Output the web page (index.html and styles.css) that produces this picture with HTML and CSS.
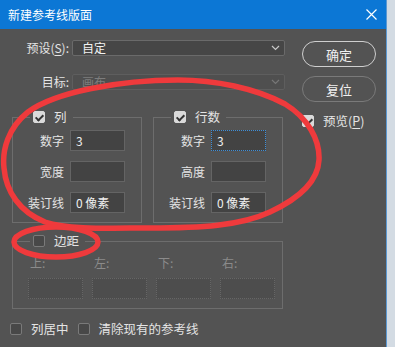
FILE: index.html
```html
<!DOCTYPE html>
<html lang="zh-CN">
<head>
    <meta charset="UTF-8">
    <title>新建参考线版面</title>
    <link rel="stylesheet" href="styles.css">
</head>
<body>
<div class="window">
    <div class="dialog">
        <div class="titlebar">
            <span class="title">新建参考线版面</span>
            <svg class="close" width="11" height="11" viewBox="0 0 11 11">
                <path d="M0.5 0.5 L10.5 10.5 M10.5 0.5 L0.5 10.5" stroke="#fff" stroke-width="1.2"/>
            </svg>
        </div>
        <div class="content">
            <div class="main">
                <div class="field-row">
                    <span class="row-label">预设(<u>S</u>):</span>
                    <div class="select">
                        <span>自定</span>
                        <svg width="9" height="6" viewBox="0 0 9 6"><path d="M1 1 L4.5 4.5 L8 1" fill="none" stroke="#c8c8c8" stroke-width="1.2"/></svg>
                    </div>
                </div>
                <div class="field-row second">
                    <span class="row-label">目标:</span>
                    <div class="select disabled">
                        <span>画布</span>
                        <svg width="9" height="6" viewBox="0 0 9 6"><path d="M1 1 L4.5 4.5 L8 1" fill="none" stroke="#777" stroke-width="1.2"/></svg>
                    </div>
                </div>

                <div class="groups">
                    <fieldset class="group">
                        <legend><span class="check on"></span>列</legend>
                        <div class="num-row"><span class="num-label">数字</span><div class="input">3</div></div>
                        <div class="num-row"><span class="num-label">宽度</span><div class="input"></div></div>
                        <div class="num-row"><span class="num-label">装订线</span><div class="input">0 像素</div></div>
                    </fieldset>
                    <fieldset class="group">
                        <legend><span class="check on"></span>行数</legend>
                        <div class="num-row"><span class="num-label">数字</span><div class="input focus">3</div></div>
                        <div class="num-row"><span class="num-label">高度</span><div class="input"></div></div>
                        <div class="num-row"><span class="num-label">装订线</span><div class="input">0 像素</div></div>
                    </fieldset>
                </div>

                <fieldset class="margins">
                    <legend><span class="check"></span>边距</legend>
                    <div class="margin-grid">
                        <div class="margin-cell"><span class="dim-label">上:</span><div class="input off"></div></div>
                        <div class="margin-cell"><span class="dim-label">左:</span><div class="input off"></div></div>
                        <div class="margin-cell"><span class="dim-label">下:</span><div class="input off"></div></div>
                        <div class="margin-cell"><span class="dim-label">右:</span><div class="input off"></div></div>
                    </div>
                </fieldset>

                <div class="bottom-row">
                    <label class="opt"><span class="check"></span><span>列居中</span></label>
                    <label class="opt"><span class="check"></span><span>清除现有的参考线</span></label>
                </div>
            </div>
            <div class="side">
                <div class="btn primary">确定</div>
                <div class="btn">复位</div>
                <label class="opt preview"><span class="check on"></span><span>预览(<u>P</u>)</span></label>
            </div>
        </div>
    </div>
    <div class="edge"></div>

    <!-- hand-drawn red marks over the dialog -->
    <svg class="marks" width="395" height="347" viewBox="0 0 395 347">
        <path d="M178 80 C120 80 55 92 28 112 C8 128 2 150 4 168 C6 192 20 212 45 222 C70 230 110 228 150 228 C200 228 240 226 270 212 C300 198 318 180 319 160 C320 140 308 118 285 104 C255 88 215 80 178 80 Z" fill="none" stroke="#ef3a3c" stroke-width="5.5"/>
        <ellipse cx="56" cy="242" rx="42" ry="15" fill="none" stroke="#ef3a3c" stroke-width="5.5"/>
    </svg>
</div>
</body>
</html>
```

FILE: styles.css
```css
* {
    box-sizing: border-box;
}
body {
    margin: 0;
    width: 395px;
    height: 347px;
    overflow: hidden;
    font-family: "Noto Sans CJK SC", "Noto Sans", sans-serif;
    font-size: 12px;
    color: #e4e4e4;
}
u {
    text-decoration: underline;
    text-underline-offset: 2px;
}

.window {
    position: relative;
    display: flex;
    height: 347px;
}
.dialog {
    width: 386px;
    display: flex;
    flex-direction: column;
    background: #535353;
}
.edge {
    flex: 1;
    border-left: 1px solid #5b98d2;
    background: #d3dbe3;
}
.marks {
    position: absolute;
    left: 0;
    top: 0;
    pointer-events: none;
}

.titlebar {
    height: 29px;
    background: #0c77d5;
    display: flex;
    align-items: center;
    justify-content: space-between;
    padding: 0 9px 0 8px;
}
.title {
    color: #fff;
    font-size: 12px;
    line-height: 16px;
}

.content {
    flex: 1;
    display: flex;
    padding: 11px 0 0 12px;
}
.main {
    width: 273px;
}
.side {
    margin-left: 17px;
    width: 74px;
    display: flex;
    flex-direction: column;
}

/* top selects */
.field-row {
    display: flex;
    align-items: center;
    height: 16px;
}
.field-row.second {
    margin-top: 18px;
}
.row-label {
    width: 57px;
    text-align: right;
    margin-right: 3px;
    line-height: 16px;
}
.select {
    width: 213px;
    height: 16px;
    display: flex;
    align-items: center;
    justify-content: space-between;
    padding: 0 4px 0 9px;
    background: #464646;
    border: 1px solid #6a6a6a;
    border-radius: 2px;
    color: #f2f2f2;
    line-height: 14px;
}
.select.disabled {
    background: #4f4f4f;
    border-color: #5e5e5e;
    color: #7d7d7d;
}

/* checkboxes */
.check {
    display: inline-block;
    flex: none;
    width: 12px;
    height: 12px;
    border-radius: 2px;
    background: #484848;
    border: 1px solid #7a7a7a;
    position: relative;
}
.check.on {
    background: #dadada;
    border-color: #dadada;
}
.check.on::after {
    content: "";
    position: absolute;
    left: 3px;
    top: 1px;
    width: 3px;
    height: 6px;
    border: solid #333;
    border-width: 0 2px 2px 0;
    transform: rotate(45deg);
}

/* column / row groups */
.groups {
    display: flex;
    gap: 11px;
    margin-top: 20px;
}
fieldset {
    margin: 0;
    border: 1px solid #6d6d6d;
}
legend {
    display: flex;
    align-items: center;
    gap: 9px;
    height: 14px;
    line-height: 14px;
    padding: 0 6px 0 3px;
    margin-left: 17px;
    font-size: 12.5px;
}
.group {
    width: 130px;
    height: 113px;
    padding: 6px 0 0 0;
}
.num-row {
    display: flex;
    align-items: center;
    height: 21px;
    margin-bottom: 10px;
}
.num-label {
    width: 51px;
    text-align: right;
    margin-right: 6px;
    line-height: 16px;
    white-space: nowrap;
}
.input {
    width: 55px;
    height: 21px;
    padding-left: 5px;
    background: #434343;
    border: 1px solid #646464;
    line-height: 19px;
    color: #f0f0f0;
}
.input.focus {
    border: 1px dotted #3f8fd8;
}
.input.off {
    background: #4d4d4d;
    border: 1px dotted #666;
}

/* margins */
.margins {
    width: 271px;
    height: 75px;
    margin-top: 11px;
    padding: 8px 0 0 15px;
}
.margins legend {
    margin-left: 2px;
}
.margin-grid {
    display: flex;
    gap: 9px;
}
.margin-cell {
    display: flex;
    flex-direction: column;
    gap: 8px;
}
.dim-label {
    padding-left: 2px;
    color: #8b8b8b;
    line-height: 14px;
}

/* bottom options */
.bottom-row {
    display: flex;
    gap: 9px;
    margin: 13px 0 0 -2px;
}
.opt {
    display: flex;
    align-items: center;
    gap: 9px;
    line-height: 14px;
    font-size: 12.5px;
    white-space: nowrap;
}

/* buttons */
.btn {
    height: 26px;
    border: 1.5px solid #7a7a7a;
    border-radius: 13px;
    display: flex;
    align-items: center;
    justify-content: center;
    font-size: 13px;
    color: #f0f0f0;
}
.btn.primary {
    border-color: #cfcfcf;
    margin-top: 1px;
    margin-bottom: 9px;
}
.preview {
    margin-top: 12px;
}
```
